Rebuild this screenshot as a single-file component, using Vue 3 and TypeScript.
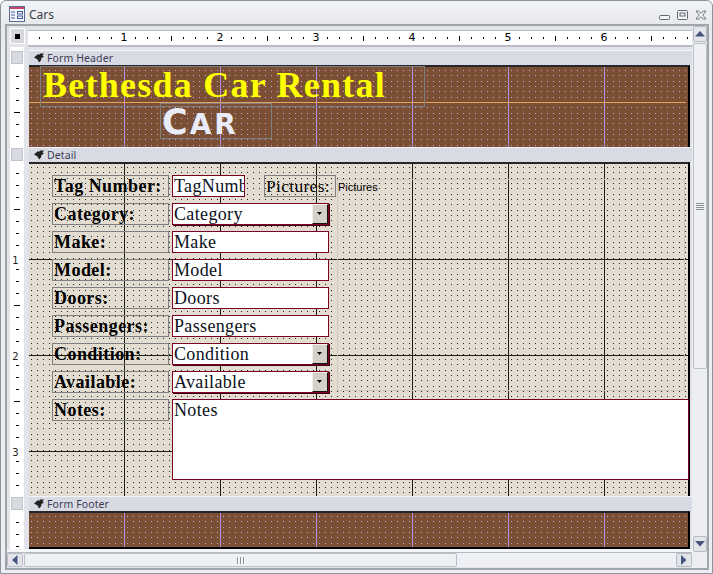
<script setup lang="ts">
interface Field {
  label: string
  value: string
  kind: 'text' | 'combo' | 'memo' | 'tag'
}

const fields: Field[] = [
  { label: 'Tag Number:', value: 'TagNumber', kind: 'tag' },
  { label: 'Category:', value: 'Category', kind: 'combo' },
  { label: 'Make:', value: 'Make', kind: 'text' },
  { label: 'Model:', value: 'Model', kind: 'text' },
  { label: 'Doors:', value: 'Doors', kind: 'text' },
  { label: 'Passengers:', value: 'Passengers', kind: 'text' },
  { label: 'Condition:', value: 'Condition', kind: 'combo' },
  { label: 'Available:', value: 'Available', kind: 'combo' },
  { label: 'Notes:', value: 'Notes', kind: 'memo' }
]

interface Tick {
  size: 'small' | 'mid' | 'num'
  num: number
}

function makeTicks(count: number, start = 0): Tick[] {
  const out: Tick[] = []
  for (let i = 1; i <= count; i++) {
    const n = i + start
    const size = n % 8 === 0 ? 'num' : n % 4 === 0 ? 'mid' : 'small'
    out.push({ size, num: n / 8 })
  }
  return out
}

const hTicks = makeTicks(55)
const headerTicks = makeTicks(6)
const detailTicks = makeTicks(27)
const footerTicks = makeTicks(3)
</script>

<template>
  <div class="window">
    <header class="title">
      <svg class="app-icon" width="16" height="16" viewBox="0 0 16 16">
        <rect x="0.5" y="0.5" width="15" height="15" fill="#f4f6fb" stroke="#5a6a94" />
        <rect x="1" y="1" width="14" height="2" fill="#c8426a" />
        <path d="M2 6h4M2 9h4M2 12h4" stroke="#3a5a9a" fill="none" />
        <rect x="8.5" y="5.5" width="5" height="2.5" fill="#fff" stroke="#3a5a9a" />
        <rect x="8.5" y="10" width="5" height="2.5" fill="#fff" stroke="#3a5a9a" />
      </svg>
      <span class="title-text">Cars</span>
      <div class="controls">
        <svg width="11" height="5" viewBox="0 0 11 5"><rect x="0.5" y="0.5" width="10" height="4" rx="1" fill="#f4f5f7" stroke="#5f6873" /></svg>
        <svg width="11" height="10" viewBox="0 0 11 10"><rect x="0.5" y="0.5" width="10" height="9" rx="1" fill="#f4f5f7" stroke="#5f6873" /><rect x="3" y="3" width="5" height="3" fill="#f4f5f7" stroke="#5f6873" /></svg>
        <svg width="12" height="10" viewBox="0 0 12 10"><path d="M1 1h2.500L6 3.200 8.500 1H11L7.800 5 11 9H8.500L6 6.800 3.500 9H1L4.200 5z" fill="#f4f5f7" stroke="#5f6873" stroke-width="0.9" /></svg>
      </div>
    </header>

    <div class="frame">
      <div class="main">
        <div class="ruler-row">
          <div class="corner"><i></i></div>
          <div class="hruler">
            <div v-for="(t, i) in hTicks" :key="i" class="hcell">
              <span v-if="t.size === 'num'" class="hnum">{{ t.num }}</span>
              <i v-else :class="['htick', t.size]"></i>
            </div>
          </div>
        </div>

        <div class="rail-gap"><div class="rail-white"></div></div>

        <section class="band">
          <div class="head">
            <div class="selector"></div>
            <div class="bar">
              <svg class="mark" width="10" height="10" viewBox="0 0 10 10"><path d="M0 4.500 4 1 5 2 6 0.500h4L8.500 2.500 10 3.500 7.500 5 7 7.500 5 9.500 3.500 6.500z" fill="#222" /></svg>
              <span>Form Header</span>
            </div>
          </div>
          <div class="body header-body">
            <div class="vruler">
              <div v-for="(t, i) in headerTicks" :key="i" class="vcell">
                <i :class="['vtick', t.size]"></i>
              </div>
            </div>
            <div class="canvas brown orange">
              <div class="ctl banner">Bethesda Car Rental</div>
              <div class="ctl car">C<span class="car-small">ar</span></div>
            </div>
          </div>
        </section>

        <section class="band">
          <div class="head">
            <div class="selector"></div>
            <div class="bar">
              <svg class="mark" width="10" height="10" viewBox="0 0 10 10"><path d="M0 4.500 4 1 5 2 6 0.500h4L8.500 2.500 10 3.500 7.500 5 7 7.500 5 9.500 3.500 6.500z" fill="#222" /></svg>
              <span>Detail</span>
            </div>
          </div>
          <div class="body detail-body">
            <div class="vruler">
              <div v-for="(t, i) in detailTicks" :key="i" class="vcell">
                <span v-if="t.size === 'num'" class="vnum">{{ t.num }}</span>
                <i v-else :class="['vtick', t.size]"></i>
              </div>
            </div>
            <div class="canvas sand">
              <div class="picture-box"><span>Pictures</span></div>
              <div class="form">
                <div v-for="f in fields" :key="f.label" class="row">
                  <div class="label">{{ f.label }}</div>
                  <div :class="['input', f.kind]">
                    <span class="val">{{ f.value }}</span>
                    <span v-if="f.kind === 'combo'" class="drop">
                      <svg width="6" height="4" viewBox="0 0 6 4"><path d="M0 0h5L2.500 3z" fill="#000" /></svg>
                    </span>
                  </div>
                  <div v-if="f.kind === 'tag'" class="label pic-label">Pictures:</div>
                </div>
              </div>
            </div>
          </div>
        </section>

        <section class="band">
          <div class="head">
            <div class="selector"></div>
            <div class="bar">
              <svg class="mark" width="10" height="10" viewBox="0 0 10 10"><path d="M0 4.500 4 1 5 2 6 0.500h4L8.500 2.500 10 3.500 7.500 5 7 7.500 5 9.500 3.500 6.500z" fill="#222" /></svg>
              <span>Form Footer</span>
            </div>
          </div>
          <div class="body footer-body">
            <div class="vruler">
              <div v-for="(t, i) in footerTicks" :key="i" class="vcell">
                <i :class="['vtick', t.size]"></i>
              </div>
            </div>
            <div class="canvas brown closed"></div>
          </div>
        </section>

        <div class="under"></div>

        <div class="hscroll">
          <div class="sbtn"><svg width="6" height="10" viewBox="0 0 6 10"><path d="M5.500 0v10L0 5z" fill="#46557c" /></svg></div>
          <div class="hthumb"><i></i><i></i><i></i></div>
          <div class="sbtn end"><svg width="6" height="10" viewBox="0 0 6 10"><path d="M0 0v10L5.500 5z" fill="#46557c" /></svg></div>
        </div>
      </div>

      <aside class="vscroll">
        <div class="sbtn tall"><svg width="10" height="6" viewBox="0 0 10 6"><path d="M0 5.500h10L5 0z" fill="#46557c" /></svg></div>
        <div class="vthumb"><i></i><i></i><i></i><i></i></div>
        <div class="sbtn tall end"><svg width="10" height="6" viewBox="0 0 10 6"><path d="M0 0h10L5 5.500z" fill="#46557c" /></svg></div>
      </aside>
    </div>
  </div>
</template>

<style>
html,
body {
  margin: 0;
  background: #ffffff;
}
</style>

<style scoped>
.window {
  box-sizing: border-box;
  width: 713px;
  height: 574px;
  border: 1px solid #8b939d;
  border-radius: 6px 6px 0 0;
  background: linear-gradient(#f3f4f7, #e6e8ec 24px, #eceef2 60px);
  overflow: hidden;
  font-family: "Noto Sans", sans-serif;
}
.title {
  height: 23px;
  display: flex;
  align-items: center;
  padding-left: 8px;
  padding-right: 4px;
}
.app-icon {
  margin-top: 3px;
}
.title-text {
  margin-left: 4px;
  margin-top: 3px;
  font-size: 12px;
  color: #3c4148;
}
.controls {
  margin-left: auto;
  display: flex;
  align-items: flex-end;
  gap: 7px;
  margin-top: 5px;
  padding-right: 1px;
}
.frame {
  box-sizing: border-box;
  margin-left: 4px;
  margin-right: 3px;
  height: 546px;
  border: 2px solid #a0a5ab;
  display: flex;
}
.main {
  width: 685px;
  display: flex;
  flex-direction: column;
  padding-top: 2px;
  background: #e2e4e9;
}
.ruler-row {
  height: 19px;
  box-sizing: border-box;
  display: flex;
  padding-left: 3px;
}
.corner {
  width: 15px;
  height: 16px;
  background: #d6d8de;
  border: 1px solid #fff;
  box-sizing: border-box;
  display: flex;
  align-items: center;
  justify-content: center;
}
.corner i {
  width: 5px;
  height: 5px;
  background: #000;
}
.hruler {
  margin-left: 3px;
  flex: 1;
  height: 14px;
  margin-top: 2px;
  background: #fff;
  border-top: 1px solid #b8bbc2;
  border-bottom: 2px solid #b8bbc2;
  display: flex;
  overflow: hidden;
}
.hcell {
  flex: none;
  width: 12px;
  height: 14px;
  display: flex;
  align-items: center;
  justify-content: flex-end;
}
.htick {
  display: block;
  width: 1px;
  background: #000;
}
.htick.small {
  height: 2px;
}
.htick.mid {
  height: 5px;
}
.hnum {
  flex: none;
  width: 12px;
  margin-right: -6px;
  text-align: center;
  font-size: 11px;
  line-height: 14px;
  color: #000;
  font-family: "DejaVu Sans", sans-serif;
  position: relative;
}
.rail-gap {
  height: 3px;
  padding-left: 3px;
}
.rail-white {
  width: 14px;
  height: 3px;
  background: #fff;
}
.head {
  display: flex;
  height: 15px;
  padding-left: 3px;
}
.selector {
  box-sizing: border-box;
  width: 14px;
  height: 15px;
  background: #d8dae2;
  border: 1px solid #fff;
  outline: 1px solid #c0c3ca;
  outline-offset: -2px;
}
.bar {
  box-sizing: border-box;
  margin-left: 5px;
  flex: 1;
  display: flex;
  align-items: center;
  gap: 3px;
  padding-left: 5px;
  background: #d9dbe4;
  border-top: 1px solid #f4f5f8;
  font-size: 10.5px;
  letter-spacing: 0.1px;
  color: #3c3c54;
}
.mark {
  flex: none;
}
.body {
  display: flex;
  padding-left: 3px;
}
.header-body {
  height: 82px;
}
.detail-body {
  height: 334px;
}
.footer-body {
  height: 38px;
}
.vruler {
  flex: none;
  width: 14px;
  background: #fff;
  overflow: hidden;
}
.vcell {
  height: 12px;
  display: flex;
  justify-content: center;
  align-items: flex-end;
}
.vtick {
  display: block;
  height: 1px;
  background: #000;
}
.vtick.small {
  width: 3px;
}
.vtick.mid {
  width: 6px;
}
.vnum {
  font-size: 10px;
  line-height: 12px;
  color: #222;
  font-family: "DejaVu Sans", sans-serif;
  margin-bottom: -9px;
  margin-right: 3px;
}
.canvas {
  box-sizing: border-box;
  position: relative;
  flex: none;
  margin-left: 5px;
  width: 661px;
  border-top: 2px solid #26262a;
  border-right: 2px solid #000;
}
.brown {
  --dot: conic-gradient(from 0deg at 1px 1px, transparent 270deg, #c7a6dd 270deg);
  background-color: #7a4f33;
  background-image:
    linear-gradient(90deg, #b58fe2 1px, transparent 1px),
    var(--dot), var(--dot), var(--dot);
  background-size: 96px 100%, 6px 16px, 6px 16px, 6px 16px;
  background-position: 95px 0, 2px 3px, 2px 8px, 2px 14px;
}
.orange {
  background-image:
    linear-gradient(#e8a262 1px, transparent 1px),
    linear-gradient(90deg, #b58fe2 1px, transparent 1px),
    var(--dot), var(--dot), var(--dot);
  background-size: 657px 100%, 96px 100%, 6px 16px, 6px 16px, 6px 16px;
  background-position: 0 35px, 95px 0, 2px 3px, 2px 8px, 2px 14px;
  background-repeat: no-repeat, repeat, repeat, repeat, repeat;
}
.closed {
  border-bottom: 2px solid #000;
}
.sand {
  --dot: conic-gradient(from 0deg at 1px 1px, transparent 270deg, #26241c 270deg);
  background-color: #e3ddd1;
  background-image:
    linear-gradient(#1e1c12 1px, transparent 1px),
    linear-gradient(90deg, #1e1c12 1px, transparent 1px),
    var(--dot), var(--dot), var(--dot);
  background-size: 100% 96px, 96px 100%, 6px 16px, 6px 16px, 6px 16px;
  background-position: 0 95px, 95px 0, 2px 3px, 2px 8px, 2px 14px;
}
.ctl {
  box-sizing: border-box;
  position: absolute;
  border: 1px solid #7f7f7f;
  white-space: nowrap;
}
.banner {
  left: 11px;
  top: -1px;
  width: 385px;
  height: 41px;
  padding-left: 2px;
  font-family: "Liberation Serif", serif;
  font-weight: 700;
  font-size: 36px;
  line-height: 36px;
  color: #ffff00;
  letter-spacing: 1.25px;
}
.car {
  left: 131px;
  top: 36px;
  width: 112px;
  height: 36px;
  padding-left: 1px;
  font-family: "DejaVu Sans", sans-serif;
  font-weight: 700;
  font-size: 35px;
  line-height: 36px;
  color: #e8ecf8;
  letter-spacing: 2px;
}
.car-small {
  font-size: 28px;
  text-transform: uppercase;
  letter-spacing: 3px;
}
.picture-box {
  box-sizing: border-box;
  position: absolute;
  left: 308px;
  top: 15px;
  width: 348px;
  height: 212px;
  border: 1px solid #cfcac0;
  padding-top: 1px;
  font-family: "Liberation Sans", sans-serif;
  font-size: 11px;
  line-height: 13px;
  color: #000;
}
.form {
  position: relative;
  display: flex;
  flex-direction: column;
  gap: 6px;
  padding-top: 11px;
  padding-left: 23px;
  font-family: "Liberation Serif", serif;
  font-size: 18px;
}
.row {
  display: flex;
  align-items: flex-start;
}
.label {
  box-sizing: border-box;
  flex: none;
  width: 117px;
  height: 22px;
  border: 1px solid #7f7f7f;
  padding-left: 1px;
  font-weight: 700;
  line-height: 20px;
  letter-spacing: 0.45px;
  color: #000;
  white-space: nowrap;
}
.pic-label {
  width: 72px;
  margin-left: 19px;
  font-weight: 400;
  font-size: 17.5px;
  letter-spacing: 0.3px;
}
.input {
  box-sizing: border-box;
  flex: none;
  margin-left: 3px;
  width: 157px;
  height: 22px;
  background: #fff;
  border: 1px solid #7a0026;
  padding-left: 1px;
  display: flex;
  justify-content: space-between;
  line-height: 20px;
  letter-spacing: 0.35px;
  color: #0a1020;
  overflow: hidden;
  white-space: nowrap;
}
.input.tag {
  width: 73px;
}
.input.combo {
  box-shadow: 1px 1px 0 #400014;
}
.input.memo {
  width: 517px;
  height: 81px;
}
.drop {
  box-sizing: border-box;
  flex: none;
  width: 16px;
  height: 20px;
  display: flex;
  align-items: center;
  justify-content: center;
  background: #d4d0c8;
  border-top: 1px solid #f2f1ec;
  border-left: 1px solid #f2f1ec;
  border-right: 1px solid #111;
  border-bottom: 1px solid #111;
}
.under {
  height: 4px;
  background: #f4f5f8;
  border-bottom: 1px solid #b4b8bf;
  box-sizing: border-box;
}
.hscroll {
  height: 14px;
  display: flex;
  background: #eef0f5;
}
.sbtn {
  box-sizing: border-box;
  flex: none;
  width: 16px;
  height: 14px;
  display: flex;
  align-items: center;
  justify-content: center;
  background: #e3e5ea;
  border: 1px solid #b6bac2;
  border-radius: 2px;
}
.sbtn.end {
  margin-left: auto;
}
.hthumb {
  box-sizing: border-box;
  margin-left: 1px;
  width: 433px;
  height: 14px;
  background: #eef0f4;
  border: 1px solid #bcc0c8;
  border-radius: 2px;
  display: flex;
  align-items: center;
  justify-content: center;
  gap: 1px;
}
.hthumb i {
  width: 1px;
  height: 7px;
  background: #8a8f98;
  box-shadow: 1px 0 0 #fff;
  margin-right: 1px;
}
.vscroll {
  width: 14px;
  margin-left: 1px;
  display: flex;
  flex-direction: column;
  height: 526px;
}
.sbtn.tall {
  width: 14px;
  height: 16px;
}
.sbtn.tall.end {
  margin-left: 0;
  margin-top: auto;
}
.vthumb {
  box-sizing: border-box;
  margin-top: 1px;
  height: 326px;
  background: #eef0f4;
  border: 1px solid #bcc0c8;
  border-radius: 2px;
  display: flex;
  flex-direction: column;
  align-items: center;
  justify-content: center;
  gap: 1px;
}
.vthumb i {
  width: 8px;
  height: 1px;
  background: #8a8f98;
}
</style>
